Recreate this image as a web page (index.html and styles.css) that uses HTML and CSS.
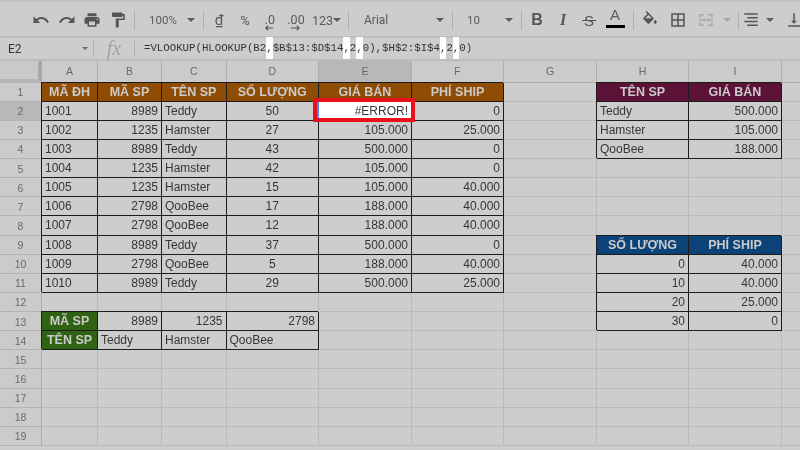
FILE: index.html
```html
<!DOCTYPE html>
<html lang="vi">
<head>
<meta charset="utf-8">
<title>Google Sheets</title>
<link rel="stylesheet" href="styles.css">
</head>
<body>
<div class="app">
<div class="toolbar">
  <div class="tool w-undo"><svg class="ic" viewBox="0 0 24 24"><path d="M12.5 8c-2.65 0-5.05.99-6.9 2.6L2 7v9h9l-3.62-3.62c1.39-1.16 3.16-1.88 5.12-1.88 3.54 0 6.55 2.31 7.6 5.5l2.37-.78C21.08 11.03 17.15 8 12.5 8z"/></svg></div>
  <div class="tool w-redo"><svg class="ic" viewBox="0 0 24 24"><path d="M18.4 10.6C16.55 8.99 14.15 8 11.5 8c-4.65 0-8.58 3.03-9.96 7.22L3.9 16c1.05-3.19 4.05-5.5 7.6-5.5 1.95 0 3.73.72 5.12 1.88L13 16h9V7l-3.6 3.6z"/></svg></div>
  <div class="tool w-print"><svg class="ic" viewBox="0 0 24 24"><path d="M19 8H5c-1.66 0-3 1.34-3 3v6h4v4h12v-4h4v-6c0-1.66-1.34-3-3-3zm-3 11H8v-5h8v5zm3-7c-.55 0-1-.45-1-1s.45-1 1-1 1 .45 1 1-.45 1-1 1zm-1-9H6v4h12V3z"/></svg></div>
  <div class="tool w-paint"><svg class="ic" viewBox="0 0 24 24"><path d="M18 4V3c0-.55-.45-1-1-1H5c-.55 0-1 .45-1 1v4c0 .55.45 1 1 1h12c.55 0 1-.45 1-1V6h1v4H9v11c0 .55.45 1 1 1h2c.55 0 1-.45 1-1v-9h8V4h-3z"/></svg></div>
  <div class="sep s-a"></div>
  <div class="drop d-zoom"><span>100%</span><i class="caret"></i></div>
  <div class="sep"></div>
  <div class="tool w-dong"><span class="dong">₫</span></div>
  <div class="tool w-pct"><span>%</span></div>
  <div class="tool w-dec1"><div class="dec"><span>.0</span><svg class="arrow" viewBox="0 0 10 6"><path d="M0 3h9M3.5 .5L1 3l2.5 2.5" /></svg></div></div>
  <div class="tool w-dec2"><div class="dec"><span>.00</span><svg class="arrow" viewBox="0 0 10 6"><path d="M0 3h9M6.5 .5L9 3 6.5 5.5" /></svg></div></div>
  <div class="drop d-num"><span>123</span><i class="caret"></i></div>
  <div class="sep s-b"></div>
  <div class="drop d-font"><span>Arial</span><i class="caret"></i></div>
  <div class="sep"></div>
  <div class="drop d-size"><span>10</span><i class="caret"></i></div>
  <div class="sep"></div>
  <div class="tool w-b"><span class="fmt-b">B</span></div>
  <div class="tool w-i"><span class="fmt-i">I</span></div>
  <div class="tool w-s"><span class="fmt-s">S</span></div>
  <div class="tool w-a"><div class="fmt-a"><span>A</span><i class="colorbar"></i></div></div>
  <div class="sep s-c"></div>
  <div class="tool w-fill"><svg class="ic" viewBox="0 0 24 24"><path d="M16.56 8.94L7.62 0 6.21 1.41l2.38 2.38-5.15 5.15c-.59.59-.59 1.54 0 2.12l5.5 5.5c.29.29.68.44 1.06.44s.77-.15 1.06-.44l5.5-5.5c.59-.58.59-1.53 0-2.12zM5.21 10L10 5.21 14.79 10z"/><path d="M5 10h10l-5 5zM19 11.5s-2 2.17-2 3.5c0 1.1.9 2 2 2s2-.9 2-2c0-1.33-2-3.5-2-3.5z"/></svg></div>
  <div class="tool w-bord"><svg class="ic" viewBox="0 0 24 24"><path d="M3 3v18h18V3H3zm8 16H5v-6h6v6zm0-8H5V5h6v6zm8 8h-6v-6h6v6zm0-8h-6V5h6v6z"/></svg></div>
  <div class="tool w-merge"><svg class="ic muted" viewBox="0 0 24 24"><path d="M3 4h6v2H5v3H3zM15 4h6v5h-2V6h-4zM3 15h2v3h4v2H3zM19 15h2v5h-6v-2h4zM3 11h6V9l3 3-3 3v-2H3zM21 11h-6V9l-3 3 3 3v-2h6z"/></svg></div>
  <div class="tool w-mcaret"><i class="caret pale"></i></div>
  <div class="sep s-d"></div>
  <div class="tool w-align"><svg class="ic" viewBox="0 0 24 24"><path d="M3 3h18v2H3zM7 8h14v2H7zM3 13h18v2H3zM7 18h14v2H7z"/></svg></div>
  <div class="tool w-acaret"><i class="caret"></i></div>
  <div class="tool w-valign"><svg class="ic" viewBox="0 0 24 24"><path d="M16 13h-3V3h-2v10H8l4 4 4-4zM4 19v2h16v-2H4z"/></svg></div>
</div>

<div class="fbar">
  <div class="namebox"><span>E2</span><i class="caret small"></i></div>
  <div class="sep tall"></div>
  <div class="fx">fx</div>
  <div class="sep tall"></div>
  <div class="formula">=VLOOKUP(HLOOKUP(B2<span class="hl">,</span>$B$13:$D$14<span class="hl">,</span>2<span class="hl">,</span>0),$H$2:$I$4<span class="hl">,</span>2<span class="hl">,</span>0)</div>
</div>

<div class="sheet">
  <div class="corner"></div><div class="ch">A</div><div class="ch">B</div><div class="ch">C</div><div class="ch">D</div><div class="ch on">E</div><div class="ch">F</div><div class="ch">G</div><div class="ch">H</div><div class="ch">I</div><div class="ch"></div>

  <div class="rh">1</div><div class="c k hd or">MÃ ĐH</div><div class="c k hd or">MÃ SP</div><div class="c k hd or">TÊN SP</div><div class="c k hd or">SỐ LƯỢNG</div><div class="c k hd or">GIÁ BÁN</div><div class="c k hd or">PHÍ SHIP</div><div class="c"></div><div class="c k hd ma">TÊN SP</div><div class="c k hd ma">GIÁ BÁN</div><div class="c"></div>

  <div class="rh on">2</div><div class="c k">1001</div><div class="c k r">8989</div><div class="c k">Teddy</div><div class="c k m">50</div><div class="c k r sel">#ERROR!<div class="redbox"></div></div><div class="c k r">0</div><div class="c"></div><div class="c k">Teddy</div><div class="c k r">500.000</div><div class="c"></div>

  <div class="rh">3</div><div class="c k">1002</div><div class="c k r">1235</div><div class="c k">Hamster</div><div class="c k m">27</div><div class="c k r">105.000</div><div class="c k r">25.000</div><div class="c"></div><div class="c k">Hamster</div><div class="c k r">105.000</div><div class="c"></div>

  <div class="rh">4</div><div class="c k">1003</div><div class="c k r">8989</div><div class="c k">Teddy</div><div class="c k m">43</div><div class="c k r">500.000</div><div class="c k r">0</div><div class="c"></div><div class="c k">QooBee</div><div class="c k r">188.000</div><div class="c"></div>

  <div class="rh">5</div><div class="c k">1004</div><div class="c k r">1235</div><div class="c k">Hamster</div><div class="c k m">42</div><div class="c k r">105.000</div><div class="c k r">0</div><div class="c"></div><div class="c"></div><div class="c"></div><div class="c"></div>

  <div class="rh">6</div><div class="c k">1005</div><div class="c k r">1235</div><div class="c k">Hamster</div><div class="c k m">15</div><div class="c k r">105.000</div><div class="c k r">40.000</div><div class="c"></div><div class="c"></div><div class="c"></div><div class="c"></div>

  <div class="rh">7</div><div class="c k">1006</div><div class="c k r">2798</div><div class="c k">QooBee</div><div class="c k m">17</div><div class="c k r">188.000</div><div class="c k r">40.000</div><div class="c"></div><div class="c"></div><div class="c"></div><div class="c"></div>

  <div class="rh">8</div><div class="c k">1007</div><div class="c k r">2798</div><div class="c k">QooBee</div><div class="c k m">12</div><div class="c k r">188.000</div><div class="c k r">40.000</div><div class="c"></div><div class="c"></div><div class="c"></div><div class="c"></div>

  <div class="rh">9</div><div class="c k">1008</div><div class="c k r">8989</div><div class="c k">Teddy</div><div class="c k m">37</div><div class="c k r">500.000</div><div class="c k r">0</div><div class="c"></div><div class="c k hd bl">SỐ LƯỢNG</div><div class="c k hd bl">PHÍ SHIP</div><div class="c"></div>

  <div class="rh">10</div><div class="c k">1009</div><div class="c k r">2798</div><div class="c k">QooBee</div><div class="c k m">5</div><div class="c k r">188.000</div><div class="c k r">40.000</div><div class="c"></div><div class="c k r">0</div><div class="c k r">40.000</div><div class="c"></div>

  <div class="rh">11</div><div class="c k">1010</div><div class="c k r">8989</div><div class="c k">Teddy</div><div class="c k m">29</div><div class="c k r">500.000</div><div class="c k r">25.000</div><div class="c"></div><div class="c k r">10</div><div class="c k r">40.000</div><div class="c"></div>

  <div class="rh">12</div><div class="c"></div><div class="c"></div><div class="c"></div><div class="c"></div><div class="c"></div><div class="c"></div><div class="c"></div><div class="c k r">20</div><div class="c k r">25.000</div><div class="c"></div>

  <div class="rh">13</div><div class="c k hd gr">MÃ SP</div><div class="c k r">8989</div><div class="c k r">1235</div><div class="c k r">2798</div><div class="c"></div><div class="c"></div><div class="c"></div><div class="c k r">30</div><div class="c k r">0</div><div class="c"></div>

  <div class="rh">14</div><div class="c k hd gr">TÊN SP</div><div class="c k">Teddy</div><div class="c k">Hamster</div><div class="c k">QooBee</div><div class="c"></div><div class="c"></div><div class="c"></div><div class="c"></div><div class="c"></div><div class="c"></div>

  <div class="rh">15</div><div class="c"></div><div class="c"></div><div class="c"></div><div class="c"></div><div class="c"></div><div class="c"></div><div class="c"></div><div class="c"></div><div class="c"></div><div class="c"></div>
  <div class="rh">16</div><div class="c"></div><div class="c"></div><div class="c"></div><div class="c"></div><div class="c"></div><div class="c"></div><div class="c"></div><div class="c"></div><div class="c"></div><div class="c"></div>
  <div class="rh">17</div><div class="c"></div><div class="c"></div><div class="c"></div><div class="c"></div><div class="c"></div><div class="c"></div><div class="c"></div><div class="c"></div><div class="c"></div><div class="c"></div>
  <div class="rh">18</div><div class="c"></div><div class="c"></div><div class="c"></div><div class="c"></div><div class="c"></div><div class="c"></div><div class="c"></div><div class="c"></div><div class="c"></div><div class="c"></div>
  <div class="rh">19</div><div class="c"></div><div class="c"></div><div class="c"></div><div class="c"></div><div class="c"></div><div class="c"></div><div class="c"></div><div class="c"></div><div class="c"></div><div class="c"></div>
</div>
</div>
</body>
</html>
```
FILE: styles.css
```css
* { box-sizing: border-box; }
html, body { margin: 0; height: 100%; }
body { width: 800px; height: 450px; overflow: hidden; background: #cdcdcd; }
.app { width: 800px; height: 450px; overflow: hidden; background: #cdcdcd; filter: blur(.35px); font-family: Roboto, "Liberation Sans", sans-serif; color: #555; }

.toolbar { display: flex; align-items: center; height: 38px; padding-left: 27px; padding-top: 2px; border-top: 2px solid #c1c1c1; border-bottom: 2px solid #bdbdbd; font-size: 11.5px; color: #5a5a5a; }
.tool { display: flex; align-items: center; justify-content: center; flex: none; height: 32px; }
.ic { width: 18px; height: 18px; fill: #555; }
.ic.muted { fill: #a6a6a6; }
.w-undo { width: 27px; } .w-redo { width: 25px; } .w-print { width: 26px; } .w-paint { width: 26px; }
.w-dong { width: 30px; } .w-pct { width: 22px; font-size: 13px; } .w-dec1 { width: 28px; } .w-dec2 { width: 24px; }
.w-b { width: 30px; } .w-i { width: 22px; } .w-s { width: 30px; } .w-a { width: 22px; }
.w-fill { width: 32px; } .w-bord { width: 24px; } .w-merge { width: 32px; } .w-mcaret { width: 10px; }
.w-align { width: 23px; } .w-acaret { width: 16px; } .w-valign { width: 22px; margin-left: 5px; }
.sep { flex: none; width: 1px; height: 19px; background: #b0b0b0; }
.s-a { margin-left: 3px; } .s-b { margin-left: 3px; } .s-c { margin-left: 7px; } .s-d { margin-left: 6px; }
.drop { display: flex; align-items: center; justify-content: space-between; flex: none; height: 32px; }
.d-zoom { width: 68px; padding: 0 8px 0 14px; }
.d-num { width: 37px; padding: 0 4px; font-size: 12.5px; }
.d-font { width: 103px; padding: 0 8px 0 15px; font-size: 12px; }
.d-size { width: 68px; padding: 0 8px 0 14px; }
.caret { display: block; width: 0; height: 0; border: 4px solid transparent; border-top: 4px solid #5a5a5a; border-bottom: 0; }
.caret.pale { border-top-color: #a6a6a6; }
.caret.small { border-width: 3px; border-top-color: #666; border-bottom: 0; }
.dong { font-size: 15px; }
.dec { display: flex; flex-direction: column; align-items: center; margin-top: 5px; line-height: 11px; font-size: 12.5px; }
.arrow { width: 9px; height: 6px; fill: none; stroke: #555; stroke-width: 1.2; }
.fmt-b { font: bold 16px "Liberation Sans", sans-serif; color: #555; }
.fmt-i { font: italic bold 16px "Liberation Serif", serif; color: #555; }
.fmt-s { position: relative; font: 15px "Liberation Sans", sans-serif; color: #555; }
.fmt-s::after { content: ""; position: absolute; left: -2px; right: -2px; top: 8px; height: 1.5px; background: #555; }
.fmt-a { display: flex; flex-direction: column; align-items: center; font: 15px "Liberation Sans", sans-serif; line-height: 16px; margin-top: -5px; }
.colorbar { display: block; width: 19px; height: 3px; margin-top: 2px; background: #000; }

.fbar { display: flex; align-items: center; height: 23px; border-bottom: 2px solid #bdbdbd; }
.namebox { display: flex; align-items: center; justify-content: space-between; width: 93px; padding: 0 5px 0 8px; font-size: 12px; color: #333; flex: none; }
.sep.tall { height: 15px; }
.fx { width: 40px; text-align: center; font: italic 20px "Liberation Serif", serif; color: #a2a2a2; flex: none; }
.formula { padding-left: 9px; font: 10.72px/23px "Liberation Mono", monospace; color: #333; white-space: pre; }
.hl { display: inline-block; background: #fff; height: 22px; }

.sheet { display: grid; grid-template-columns: 42px 56px 64px 64.5px 92.5px 93px 92px 93px 92px 93px 19px; grid-template-rows: 21.5px; grid-auto-rows: 19.13px; }
.corner { background: #c9c9c9; border-right: 4px solid #a9a9a9; border-bottom: 4px solid #b5b5b5; }
.ch { display: flex; align-items: center; justify-content: center; background: #cbcbcb; border-right: 1px solid #adadad; border-bottom: 1px solid #adadad; font: 10.5px "Liberation Sans", sans-serif; color: #6a6a6a; }
.rh { display: flex; align-items: center; justify-content: center; padding-top: 1px; background: #cbcbcb; border-right: 1px solid #adadad; border-bottom: 1px solid #b5b5b5; font: 10.5px "Liberation Sans", sans-serif; color: #6a6a6a; }
.on { background: #b7b8ba; }
.c { padding: 0 3px; border-right: 1px solid #bababa; border-bottom: 1px solid #bababa; font: 12px/19px "Liberation Sans", sans-serif; color: #363636; white-space: nowrap; overflow: hidden; }
.k { border-color: #1c1c1c; box-shadow: -1px -1px 0 #1c1c1c; }
.r { text-align: right; }
.m { text-align: center; }
.hd { text-align: center; font-weight: bold; font-size: 12.5px; color: #cbcbcb; }
.or { background: #8f4c04; }
.ma { background: #5c1236; }
.bl { background: #0b4379; }
.gr { background: #2f6213; }
.sel { position: relative; overflow: visible; background: #fff; box-shadow: none; border-color: #fff; }
.redbox { position: absolute; top: -4px; bottom: -2px; left: -6px; right: -4px; border: 4px solid #e8101a; box-shadow: inset 2px 0 0 #4a86e8; }
```
